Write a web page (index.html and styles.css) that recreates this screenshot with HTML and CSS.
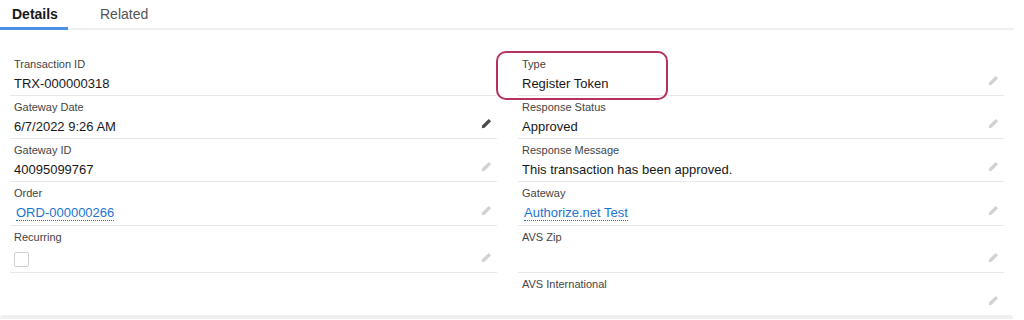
FILE: index.html
```html
<!DOCTYPE html>
<html lang="en">
<head>
    <meta charset="UTF-8">
    <meta name="viewport" content="width=device-width, initial-scale=1.0">
    <title>Transaction Details</title>
    <link rel="stylesheet" href="styles.css">
</head>
<body>
    <!-- Onglets -->
    <nav class="tabs">
        <a class="tab tab-active">Details</a>
        <a class="tab">Related</a>
    </nav>

    <!-- Champs -->
    <section class="details">
        <div class="colonne">
            <div class="champ">
                <div class="champ-corps">
                    <p class="champ-label">Transaction ID</p>
                    <p class="champ-valeur">TRX-000000318</p>
                </div>
            </div>
            <div class="champ">
                <div class="champ-corps">
                    <p class="champ-label">Gateway Date</p>
                    <p class="champ-valeur">6/7/2022 9:26 AM</p>
                </div>
                <svg class="editer editer-actif" viewBox="0 0 12 12"><path d="M0.8 11.2 L1.4 8 L8.4 1 L11 3.6 L4 10.6 Z"/></svg>
            </div>
            <div class="champ">
                <div class="champ-corps">
                    <p class="champ-label">Gateway ID</p>
                    <p class="champ-valeur">40095099767</p>
                </div>
                <svg class="editer" viewBox="0 0 12 12"><path d="M0.8 11.2 L1.4 8 L8.4 1 L11 3.6 L4 10.6 Z"/></svg>
            </div>
            <div class="champ champ-lien">
                <div class="champ-corps">
                    <p class="champ-label">Order</p>
                    <p class="champ-valeur"><a class="lien" href="#">ORD-000000266</a></p>
                </div>
                <svg class="editer" viewBox="0 0 12 12"><path d="M0.8 11.2 L1.4 8 L8.4 1 L11 3.6 L4 10.6 Z"/></svg>
            </div>
            <div class="champ champ-haut">
                <div class="champ-corps">
                    <p class="champ-label">Recurring</p>
                    <p class="champ-valeur"><span class="case"></span></p>
                </div>
                <svg class="editer" viewBox="0 0 12 12"><path d="M0.8 11.2 L1.4 8 L8.4 1 L11 3.6 L4 10.6 Z"/></svg>
            </div>
        </div>

        <div class="colonne">
            <div class="champ">
                <div class="surligne"></div>
                <div class="champ-corps">
                    <p class="champ-label">Type</p>
                    <p class="champ-valeur">Register Token</p>
                </div>
                <svg class="editer" viewBox="0 0 12 12"><path d="M0.8 11.2 L1.4 8 L8.4 1 L11 3.6 L4 10.6 Z"/></svg>
            </div>
            <div class="champ">
                <div class="champ-corps">
                    <p class="champ-label">Response Status</p>
                    <p class="champ-valeur">Approved</p>
                </div>
                <svg class="editer" viewBox="0 0 12 12"><path d="M0.8 11.2 L1.4 8 L8.4 1 L11 3.6 L4 10.6 Z"/></svg>
            </div>
            <div class="champ">
                <div class="champ-corps">
                    <p class="champ-label">Response Message</p>
                    <p class="champ-valeur">This transaction has been approved.</p>
                </div>
                <svg class="editer" viewBox="0 0 12 12"><path d="M0.8 11.2 L1.4 8 L8.4 1 L11 3.6 L4 10.6 Z"/></svg>
            </div>
            <div class="champ champ-lien">
                <div class="champ-corps">
                    <p class="champ-label">Gateway</p>
                    <p class="champ-valeur"><a class="lien" href="#">Authorize.net Test</a></p>
                </div>
                <svg class="editer" viewBox="0 0 12 12"><path d="M0.8 11.2 L1.4 8 L8.4 1 L11 3.6 L4 10.6 Z"/></svg>
            </div>
            <div class="champ champ-haut">
                <div class="champ-corps">
                    <p class="champ-label">AVS Zip</p>
                    <p class="champ-valeur"></p>
                </div>
                <svg class="editer" viewBox="0 0 12 12"><path d="M0.8 11.2 L1.4 8 L8.4 1 L11 3.6 L4 10.6 Z"/></svg>
            </div>
            <div class="champ champ-dernier">
                <div class="champ-corps">
                    <p class="champ-label">AVS International</p>
                    <p class="champ-valeur"></p>
                </div>
                <svg class="editer" viewBox="0 0 12 12"><path d="M0.8 11.2 L1.4 8 L8.4 1 L11 3.6 L4 10.6 Z"/></svg>
            </div>
        </div>
    </section>

    <div class="bas"></div>
</body>
</html>
```

FILE: styles.css
```css
/* Styles généraux */
body {
    font-family: "Liberation Sans", Arial, sans-serif;
    margin: 0;
    padding: 0;
    background-color: #fff;
    color: #181818;
}
p {
    margin: 0;
}

/* Onglets */
.tabs {
    display: flex;
    height: 28px;
    border-bottom: 2px solid #f0f0f0;
    width: 1014px;
}
.tab {
    display: block;
    font-size: 14px;
    line-height: 28px;
    color: #555;
}
.tab-active {
    width: 56px;
    padding-left: 12px;
    font-weight: bold;
    color: #181818;
    border-bottom: 3px solid #4a8fea;
    margin-bottom: -2px;
    height: 27px;
}
.tab + .tab {
    margin-left: 32px;
}

/* Champs */
.details {
    display: grid;
    grid-template-columns: 487px 486px;
    column-gap: 21px;
    padding: 23px 0 0 10px;
}
.champ {
    position: relative;
    display: flex;
    align-items: flex-end;
    padding: 2px 4px 2px 4px;
    border-bottom: 1px solid #e8e8e8;
    height: 38px;
}
.champ-lien {
    height: 39px;
}
.champ-haut {
    height: 42px;
}
.champ-dernier {
    border-bottom: none;
}
.champ-corps {
    flex-grow: 1;
    align-self: flex-start;
}
.champ-label {
    font-size: 11px;
    line-height: 19px;
    color: #444;
}
.champ-valeur {
    font-size: 13px;
    line-height: 20px;
    min-height: 20px;
}
.lien {
    color: #1b74d0;
    text-decoration: none;
    border-bottom: 1px dotted #1b74d0;
    margin-left: 2px;
}
.case {
    display: block;
    width: 13px;
    height: 13px;
    margin-top: 5px;
    border: 1px solid #cfcfcf;
    border-radius: 2px;
}
.editer {
    width: 11px;
    height: 11px;
    fill: #d2d2d2;
    margin: 0 1px 7px 0;
    flex-shrink: 0;
}
.editer-actif {
    fill: #4a4a4a;
}
.surligne {
    position: absolute;
    left: -22px;
    top: -2px;
    width: 168px;
    height: 45px;
    border: 2px solid #b5315e;
    border-radius: 10px;
}

.bas {
    height: 4px;
    width: 1013px;
    background-color: #f0f0f0;
    border-radius: 3px 3px 0 0;
}
```
